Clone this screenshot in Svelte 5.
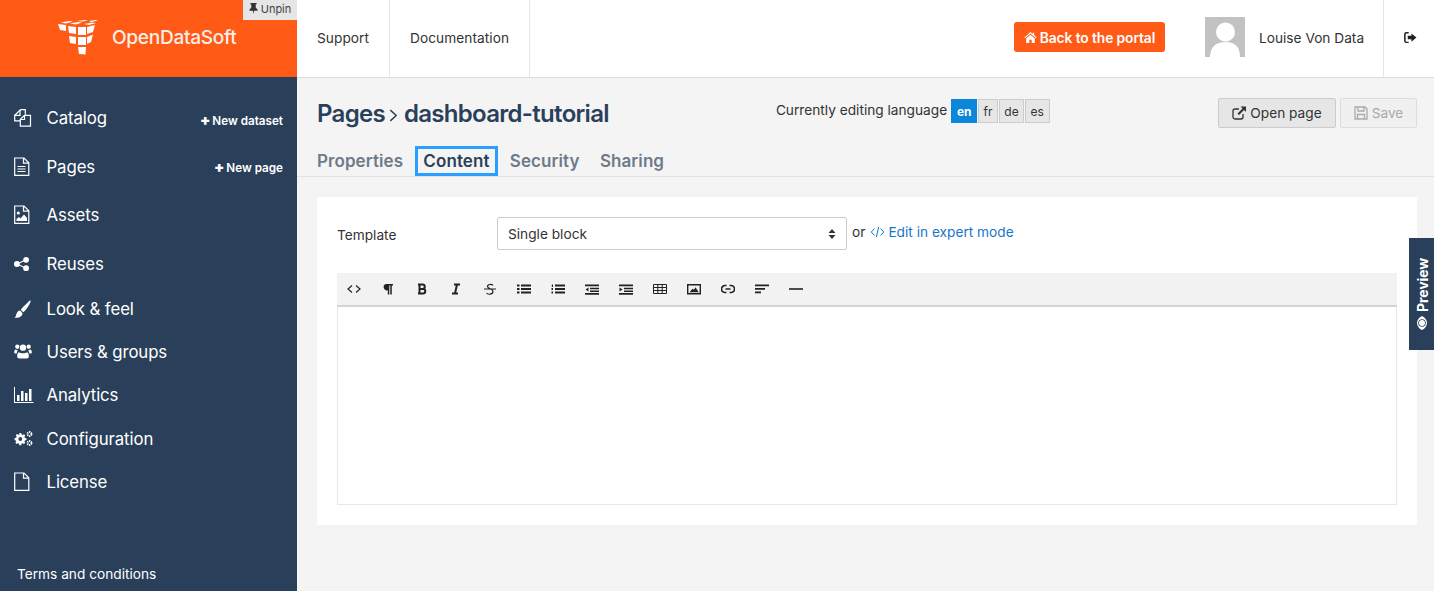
<script>
  const nav = [
    { label: 'Catalog', icon: 'files', action: 'New dataset', tall: true, low: true },
    { label: 'Pages', icon: 'filetext', action: 'New page', tall: true },
    { label: 'Assets', icon: 'fileimage', tall: true },
    { label: 'Reuses', icon: 'share', tall: true },
    { label: 'Look & feel', icon: 'brush' },
    { label: 'Users & groups', icon: 'users' },
    { label: 'Analytics', icon: 'chart' },
    { label: 'Configuration', icon: 'cogs' },
    { label: 'License', icon: 'file' }
  ];
  const langs = ['en', 'fr', 'de', 'es'];
  const tabs = ['Properties', 'Content', 'Security', 'Sharing'];
  const tools = ['code', 'para', 'bold', 'italic', 'strike', 'ul', 'ol', 'outdent', 'indent', 'table', 'image', 'link', 'align', 'hr'];
  const cubes = [
    '0,4 8,5 8,11 2,10', '10,6 18,7 18,14 11,13', '20,7 28,7 28,15 20,15', '29,7 37,5 35,12 29,14',
    '11,16 18,17 18,24 12,23', '20,17 28,17 28,25 20,25', '29,17 35,14.500 33,22 29,24',
    '20,27 28,27 27.500,34.500 21,34',
    '3,2.500 11,1 15,1.500 8,3.500', '12,3.500 20,2 24,2.500 18,4.500', '19,1 27,0 30,.5 24,1.500',
    '26,4 34,2.500 38,3 31,5', '31,1 38,0 40,.5 33,2'
  ];
</script>

{#snippet icon(name)}
  <svg class="ico" viewBox="0 0 20 20" aria-hidden="true">
    {#if name === 'files'}
      <path class="ln" d="M6.500 1.700h4.800v5M6.500 1.700.7 7.300v5.500h5.600"/><path class="ln" d="M6 1.700v5.600H.7"/><path class="ln" d="M10.500 7.300h6v10.800H6.300v-6.800zM10.500 7.300v4.200H6.300"/>
    {:else if name === 'filetext'}
      <path class="ln" d="M.7 1h9.300l4.800 4.800V18.300H.7zM9.500 1v5.200h5.300"/><path class="ln" d="M3.500 9.500h8M3.500 12h8M3.500 14.500h8"/>
    {:else if name === 'fileimage'}
      <path class="ln" d="M.7 1h9.300l4.800 4.800V18.300H.7zM9.500 1v5.200h5.300"/><circle class="fl" cx="4.300" cy="8" r="1.600"/><path class="fl" d="M2.500 16v-2l2.500-2 1.500 1.500 3.500-4 3 3.500V16z"/>
    {:else if name === 'share'}
      <circle class="fl" cx="2.900" cy="10" r="2.900"/><circle class="fl" cx="12.100" cy="5.800" r="2.900"/><circle class="fl" cx="12.100" cy="14.200" r="2.900"/><path class="ln" d="M3 10l9-4.200M3 10l9 4.200"/>
    {:else if name === 'brush'}
      <path class="fl" transform="scale(.87 .95) translate(0 1.200)" d="M19 .5c.8.600-.5 3-3 6.500-2 2.800-4 5-5.500 5.800L7.800 10C9 8.300 11.500 6 14 4c2.300-1.800 4.300-4 5-3.500zM7 11l2.800 2.700C9.500 17 6 19 .5 18.500c1.800-1 1.500-2.500 2.500-4.500 .8-1.800 2.500-3 4-3z"/>
    {:else if name === 'users'}
      <g transform="scale(.9) translate(0 .3)">
        <circle class="fl" cx="10" cy="6" r="3.500"/><circle class="fl" cx="3.700" cy="5" r="2.400"/><circle class="fl" cx="16.300" cy="5" r="2.400"/>
        <path class="fl" d="M5.500 11c1 .8 2.800 1.300 4.500 1.300s3.500-.5 4.500-1.300c1.500.3 2 2.800 2 4.500 0 1.500-1 2.500-2.500 2.500H6c-1.500 0-2.500-1-2.500-2.500 0-1.700.5-4.200 2-4.500zM.2 11.500C.2 9.500.8 8.200 1.800 8c.7.600 1.400.9 2.400.9-.6 1-1 1.900-1.200 3.600H1.200c-.6 0-1-.4-1-1zM19.800 11.500c0-2-.6-3.300-1.600-3.500-.7.600-1.400.9-2.400.9.600 1 1 1.900 1.200 3.600h1.800c.6 0 1-.4 1-1z"/>
      </g>
    {:else if name === 'chart'}
      <path class="fl" d="M0 2h1v15h18.500v1H0zM3 10h2.500v6H3zM7 6h2.500v10H7zM11 8h2.500v8H11zM15 4h2.500v12H15z"/>
    {:else if name === 'cogs'}
      <path class="fl" fill-rule="evenodd" transform="scale(.9)" d="M6 4.500h2l.4 1.700 1.200.5 1.500-.9 1.400 1.400-.9 1.500.5 1.200 1.700.4v2l-1.700.4-.5 1.200.9 1.500-1.400 1.400-1.500-.9-1.200.5-.4 1.700H6l-.4-1.700-1.200-.5-1.500.9-1.400-1.400.9-1.500-.5-1.200L.7 12.100v-2l1.700-.4.500-1.200-.9-1.500 1.400-1.400 1.500.9 1.200-.5zM7 9a2.100 2.100 0 1 0 0 4.200A2.100 2.100 0 0 0 7 9z"/>
      <circle class="ln2" cx="15.500" cy="5" r="2"/><circle class="ln2" cx="15.500" cy="14" r="2"/>
    {:else if name === 'file'}
      <path class="ln" d="M.7 1h9.300l4.800 4.800V18.300H.7zM9.500 1v5.200h5.300"/>
    {/if}
  </svg>
{/snippet}

{#snippet tool(name)}
  <svg class="tool" viewBox="0 0 14 14" aria-hidden="true">
    {#if name === 'code'}
      <path class="ts" d="M5 3.500 1 7l4 3.500M9 3.500 13 7l-4 3.500"/>
    {:else if name === 'para'}
      <path class="tf" d="M5 2h7v1.500h-1.200V12.500H9.300V3.500H8.300V12.500H6.800V8.200A3.100 3.100 0 0 1 5 2z"/>
    {:else if name === 'bold'}
      <path class="ts b" d="M4.500 2.500v9M3 2.500h4.500a2.200 2.200 0 0 1 0 4.500h-3M4.500 7h3.500a2.250 2.250 0 0 1 0 4.500H3"/>
    {:else if name === 'italic'}
      <path class="ts b" d="M5 2.500h6M3 11.500h6M8 2.500l-2 9"/>
    {:else if name === 'strike'}
      <path class="ts" d="M1 7h12M10 3.500C9 2 4.500 2 4.500 4.500S10 6.500 10 9.500 5 13 3.500 11"/>
    {:else if name === 'ul'}
      <path class="tf" d="M0 2.500h2.500v2H0zM0 6h2.500v2H0zM0 9.500h2.500v2H0zM4 2.500h10v2H4zM4 6h10v2H4zM4 9.500h10v2H4z"/>
    {:else if name === 'ol'}
      <path class="tf" d="M.8 2.500h1.200v2.500H.8zM.5 6h1.500v2H.5zM.5 9.500h1.500v2H.5zM4 2.500h10v2H4zM4 6h10v2H4zM4 9.500h10v2H4z"/>
    {:else if name === 'outdent'}
      <path class="tf" d="M0 2.500h14v1.700H0zM5 5.700h9v1.600H5zM5 8.500h9v1.600H5zM0 11h14v1.700H0zM3.500 5.500v4L.5 7.500z"/>
    {:else if name === 'indent'}
      <path class="tf" d="M0 2.500h14v1.700H0zM5 5.700h9v1.600H5zM5 8.500h9v1.600H5zM0 11h14v1.700H0zM.5 5.500v4l3-2z"/>
    {:else if name === 'table'}
      <path class="ts t" d="M.5 2.500h13v9H.5zM.5 5.500h13M.5 8.500h13M4.800 2.500v9M9.200 2.500v9"/>
    {:else if name === 'image'}
      <path class="ts i" d="M.7 2.700h12.600v9H.7z"/><path class="tf" d="M2.500 10.200l3-3.500 1.500 1 1.500-2.500 3.200 5z"/>
    {:else if name === 'link'}
      <path class="ts l" d="M5.500 3.500H4a3.500 3.500 0 0 0 0 7h1.500M8.500 3.500H10a3.500 3.500 0 0 1 0 7H8.500M4.500 7h5"/>
    {:else if name === 'align'}
      <path class="tf" d="M0 2.500h14v1.700H0zM0 6h10v1.700H0zM0 9.500h6v1.700H0z"/>
    {:else if name === 'hr'}
      <path class="tf" d="M0 6.200h14v1.600H0z"/>
    {/if}
  </svg>
{/snippet}

<div class="app">
  <aside class="side">
    <div class="brand">
      <svg class="logo" viewBox="0 0 40 35" aria-hidden="true">
        {#each cubes as c}<polygon points={c} />{/each}
      </svg>
      <span class="brandname">OpenDataSoft</span>
      <span class="unpin">
        <svg viewBox="0 0 10 12" aria-hidden="true"><path d="M1.500 0h7v1.200H7.500v4l2 2v1.300H5.700L5 12l-.7-3.500H.5V7.200l2-2v-4h-1z"/></svg>
        Unpin
      </span>
    </div>
    <nav class="nav">
      {#each nav as item}
        <div class="item" class:tall={item.tall}>
          <span class="ic">{@render icon(item.icon)}</span>
          <span class="lbl">{item.label}</span>
          {#if item.action}
            <span class="act" class:low={item.low}><b>+</b>{item.action}</span>
          {/if}
        </div>
      {/each}
    </nav>
    <div class="terms">Terms and conditions</div>
  </aside>

  <div class="right">
    <header class="top">
      <a class="tlink">Support</a>
      <a class="tlink">Documentation</a>
      <div class="spacer"></div>
      <button class="portal">
        <svg viewBox="0 0 14 12" aria-hidden="true"><path d="M7 0 .3 6l.7.8L7 1.500l6 5.300.7-.8L11 3.600V.8H9.300v1.300zM2.300 7.200V12h3.400V8.500h2.600V12h3.400V7.200L7 3z"/></svg>
        Back to the portal
      </button>
      <div class="avatar">
        <svg viewBox="0 0 40 40" aria-hidden="true"><rect width="40" height="40" fill="#c2c2c2"/><circle cx="20.500" cy="15" r="9.500" fill="#fff"/><path d="M5 40c0-10 6-15 15.500-15S35 30 35 40z" fill="#fff"/></svg>
      </div>
      <span class="uname">Louise Von Data</span>
      <div class="logout">
        <svg viewBox="0 0 14 12" aria-hidden="true"><path d="M5 0H2.500A2.500 2.500 0 0 0 0 2.500v7A2.500 2.500 0 0 0 2.500 12H5v-1.500H2.700a1 1 0 0 1-1-1v-7a1 1 0 0 1 1-1H5z"/><path d="M8 1.500 13.500 6 8 10.500V8H4V4h4z"/></svg>
      </div>
    </header>

    <main class="main">
      <div class="pagehead">
        <h1 class="title">Pages<svg class="chev" viewBox="0 0 10 16" aria-hidden="true"><path d="M1.500 2 8 8l-6.500 6"/></svg>dashboard-tutorial</h1>
        <div class="lang">
          <span class="langtxt">Currently editing language</span>
          <div class="langs">
            {#each langs as l, i}<span class="lg" class:on={i === 0}>{l}</span>{/each}
          </div>
        </div>
        <div class="btns">
          <button class="btn">
            <svg viewBox="0 0 14 14" aria-hidden="true"><path class="bs" d="M11 8v3a2 2 0 0 1-2 2H3a2 2 0 0 1-2-2V5a2 2 0 0 1 2-2h4"/><path class="bf" d="M8.500 .5H14V6l-2-2-5 5-1.500-1.500 5-5z"/></svg>
            Open page
          </button>
          <button class="btn off">
            <svg viewBox="0 0 14 14" aria-hidden="true"><path class="bs" d="M1 1h10l2 2v10H1zM4 1v4h6V1M3.500 13V8.500h7V13"/></svg>
            Save
          </button>
        </div>
      </div>

      <div class="tabs">
        {#each tabs as t}<span class="tab" class:active={t === 'Content'}>{t}</span>{/each}
      </div>

      <section class="card">
        <div class="row">
          <span class="rowlabel">Template</span>
          <div class="select">
            <span>Single block</span>
            <svg viewBox="0 0 8 12" aria-hidden="true"><path d="M4 1 7.500 5h-7zM4 11 .5 7h7z"/></svg>
          </div>
          <span class="or">or</span>
          <a class="expert"><svg viewBox="0 0 14 12" aria-hidden="true"><path d="M4 2.500.8 6 4 9.500M10 2.500 13.200 6 10 9.500M8.200 1 5.800 11"/></svg>Edit in expert mode</a>
        </div>
        <div class="toolbar">
          {#each tools as t}<span class="tbtn">{@render tool(t)}</span>{/each}
        </div>
        <div class="editor"></div>
      </section>
    </main>
  </div>

  <div class="preview">
    <span class="pvtxt">
      <svg viewBox="0 0 14 14" aria-hidden="true"><path fill-rule="evenodd" d="M7 2c3 0 5.500 2 7 5-1.500 3-4 5-7 5S1.500 10 0 7c1.500-3 4-5 7-5zm0 1.200a3.800 3.800 0 1 0 0 7.600 3.800 3.800 0 0 0 0-7.600z"/><circle cx="7" cy="7" r="3"/></svg>
      Preview
    </span>
  </div>
</div>

<style>
  :global(body) {
    margin: 0;
    background: #f4f4f4;
  }
  .app {
    display: flex;
    height: 591px;
    overflow: hidden;
    position: relative;
    font-family: Inter, "Liberation Sans", sans-serif;
    font-size: 13.700px;
    color: #333;
  }
  button {
    font-family: inherit;
  }

  .side {
    width: 297px;
    flex: none;
    background: #2a3f5a;
    color: #fff;
    display: flex;
    flex-direction: column;
  }
  .brand {
    height: 77px;
    flex: none;
    background: #ff5a16;
    position: relative;
    display: flex;
    align-items: center;
    padding-left: 58px;
    box-sizing: border-box;
  }
  .logo {
    width: 40px;
    height: 35px;
    fill: #fff;
    margin-top: -2px;
  }
  .brandname {
    margin-left: 14px;
    font-size: 19.100px;
    font-weight: 500;
    letter-spacing: -0.3px;
    color: #fbeee8;
    margin-top: -3px;
  }
  .unpin {
    position: absolute;
    top: 0;
    right: 0;
    width: 54px;
    height: 20px;
    box-sizing: border-box;
    background: #e6e6e6;
    color: #444;
    font-size: 11px;
    display: flex;
    align-items: center;
    justify-content: center;
    gap: 3px;
    padding-bottom: 3px;
  }
  .unpin svg {
    width: 9px;
    height: 11px;
    fill: #333;
  }

  .nav {
    margin-top: 17.150px;
  }
  .item {
    height: 43.120px;
    display: flex;
    align-items: center;
    padding: 0 14px;
  }
  .item.tall {
    height: 48.400px;
  }
  .ic {
    width: 32.500px;
    flex: none;
    display: flex;
  }
  .ico {
    width: 20px;
    height: 20px;
  }
  .ico :global(.ln) {
    fill: none;
    stroke: #fff;
    stroke-width: 1.200;
  }
  .ico :global(.ln2) {
    fill: none;
    stroke: #fff;
    stroke-width: 1.800;
    stroke-dasharray: 1.300 0.700;
  }
  .ico :global(.fl) {
    fill: #fff;
  }
  .lbl {
    font-size: 16.800px;
    font-weight: 400;
    letter-spacing: -0.1px;
  }
  .act {
    margin-left: auto;
    font-size: 11.700px;
    font-weight: 600;
  }
  .act.low {
    margin-top: 3px;
  }
  .act b {
    font-size: 15px;
    margin-right: 2px;
    line-height: 1;
  }
  .terms {
    margin-top: auto;
    padding: 0 0 8px 17px;
    line-height: 17px;
  }

  .right {
    flex: 1;
    min-width: 0;
    display: flex;
    flex-direction: column;
  }
  .top {
    height: 78px;
    flex: none;
    box-sizing: border-box;
    background: #fff;
    border-bottom: 1px solid #ddd;
    display: flex;
    align-items: center;
    padding-bottom: 3px;
  }
  .tlink {
    align-self: stretch;
    margin-bottom: -3px;
    display: flex;
    align-items: center;
    padding: 0 20px 1px;
    border-right: 1px solid #e6e6e6;
    color: #333;
    letter-spacing: 0.05px;
  }
  .spacer {
    flex: 1;
  }
  .portal {
    width: 151px;
    height: 30px;
    border: 0;
    border-radius: 3px;
    background: #ff5a16;
    color: #fff;
    font-size: 13.800px;
    font-weight: 600;
    letter-spacing: -0.1px;
    display: flex;
    align-items: center;
    justify-content: center;
    gap: 3px;
    padding: 1px 0 0;
  }
  .portal svg {
    width: 13px;
    height: 11px;
    fill: #fff;
  }
  .avatar {
    width: 40px;
    height: 40px;
    margin-left: 40px;
    overflow: hidden;
  }
  .avatar svg {
    display: block;
  }
  .uname {
    margin-left: 14px;
    padding-top: 2px;
    width: 124px;
    white-space: nowrap;
  }
  .logout {
    width: 51px;
    align-self: stretch;
    margin-bottom: -3px;
    box-sizing: border-box;
    border-left: 1px solid #e6e6e6;
    display: flex;
    align-items: center;
    justify-content: center;
    padding: 0 0 2px 3px;
  }
  .logout svg {
    width: 13px;
    height: 11px;
    fill: #222;
  }

  .main {
    flex: 1;
    padding: 0 17px 0 20px;
  }
  .pagehead {
    height: 68px;
    display: flex;
    align-items: flex-start;
    position: relative;
  }
  .title {
    margin: 20px 0 0;
    font-size: 24px;
    line-height: 32px;
    font-weight: 600;
    letter-spacing: -0.7px;
    color: #2a3f5a;
    display: flex;
    align-items: center;
    white-space: nowrap;
  }
  .chev {
    width: 9px;
    height: 15px;
    margin: 2px 5.500px 0 4.500px;
    fill: none;
    stroke: #2a3f5a;
    stroke-width: 1.600;
  }
  .lang {
    margin: 21px 0 0 167px;
    display: flex;
    align-items: center;
    gap: 4px;
    color: #333;
  }
  .langtxt {
    padding-bottom: 2px;
  }
  .langs {
    display: flex;
  }
  .lg {
    height: 24px;
    box-sizing: border-box;
    padding: 0 4.800px;
    background: #e6e6e6;
    border: 1px solid #ccc;
    font-size: 12px;
    display: flex;
    align-items: center;
    justify-content: center;
    color: #333;
    margin-left: 0.300px;
  }
  .lg.on {
    background: #0a87d9;
    border-color: #0a87d9;
    color: #fff;
    font-weight: 700;
    margin-left: 0;
  }
  .btns {
    margin: 20px 0 0 auto;
    display: flex;
    gap: 4px;
  }
  .btn {
    height: 30px;
    box-sizing: border-box;
    width: 118px;
    padding: 0;
    background: #e6e6e6;
    border: 1px solid #ccc;
    border-radius: 2px;
    color: #333;
    font-size: 13.700px;
    display: flex;
    align-items: center;
    justify-content: center;
    gap: 4px;
  }
  .btn svg {
    width: 14px;
    height: 14px;
  }
  .btn :global(.bs) {
    fill: none;
    stroke: #333;
    stroke-width: 1.300;
  }
  .btn :global(.bf) {
    fill: #333;
  }
  .btn.off {
    width: 77px;
    color: #aaa;
    background: #f0f0f0;
    border-color: #ddd;
  }
  .btn.off :global(.bs) {
    stroke: #aaa;
  }

  .tabs {
    margin-left: -20px;
    margin-right: -17px;
    padding-left: 20px;
    height: 30px;
    border-bottom: 1px solid #e2e2e2;
    display: flex;
    align-items: flex-start;
    gap: 20.300px;
  }
  .tab {
    font-size: 17px;
    font-weight: 600;
    line-height: 30px;
    letter-spacing: 0.08px;
    color: #6e7a8a;
  }
  .tab.active {
    color: #2a3f5a;
    box-shadow: 0 0 0 3px #2a9fff;
    height: 24px;
    line-height: 24px;
    margin: 3px -5px 0;
    padding: 0 5px;
  }

  .card {
    margin-top: 20px;
    height: 328px;
    background: #fff;
    padding: 20px;
    box-sizing: border-box;
    display: flex;
    flex-direction: column;
  }
  .row {
    display: flex;
    align-items: flex-start;
    height: 56px;
    flex: none;
  }
  .rowlabel {
    width: 160px;
    flex: none;
    line-height: 36px;
  }
  .select {
    width: 350px;
    height: 33px;
    box-sizing: border-box;
    flex: none;
    border: 1px solid #ccc;
    border-radius: 2px;
    padding: 0 10px;
    display: flex;
    align-items: center;
    justify-content: space-between;
  }
  .select svg {
    width: 8px;
    height: 12px;
    fill: #333;
  }
  .or {
    margin-left: 5px;
    line-height: 30px;
  }
  .expert {
    margin-left: 5px;
    line-height: 30px;
    color: #1577c8;
    display: flex;
    align-items: center;
    gap: 3px;
  }
  .expert svg {
    width: 15px;
    height: 12px;
    fill: none;
    stroke: #1577c8;
    stroke-width: 1;
  }
  .toolbar {
    height: 34px;
    flex: none;
    box-sizing: border-box;
    background: #f2f2f2;
    border-bottom: 2px solid #d4d4d4;
    padding-bottom: 1px;
    display: flex;
    align-items: center;
  }
  .tbtn {
    width: 34px;
    display: flex;
    justify-content: center;
  }
  .tool {
    width: 14px;
    height: 14px;
  }
  .tool :global(.ts) {
    fill: none;
    stroke: #222;
    stroke-width: 1.200;
  }
  .tool :global(.ts.b) {
    stroke-width: 2;
  }
  .tool :global(.ts.t) {
    stroke-width: 1;
  }
  .tool :global(.ts.i) {
    stroke-width: 1.400;
  }
  .tool :global(.ts.l) {
    stroke-width: 1.700;
  }
  .tool :global(.tf) {
    fill: #222;
  }
  .editor {
    flex: 1;
    border: 1px solid #e8e8e8;
    border-top: 0;
  }

  .preview {
    position: absolute;
    right: 0;
    top: 238px;
    width: 25px;
    height: 112px;
    background: #2a3f5a;
    display: flex;
    align-items: center;
    justify-content: center;
  }
  .pvtxt {
    writing-mode: vertical-rl;
    transform: rotate(180deg) translateX(-1px);
    color: #fff;
    font-size: 14px;
    font-weight: 700;
    display: flex;
    align-items: center;
    gap: 4px;
    letter-spacing: -0.1px;
  }
  .pvtxt svg {
    width: 14px;
    height: 14px;
    fill: #fff;
    transform: rotate(90deg);
  }
</style>
